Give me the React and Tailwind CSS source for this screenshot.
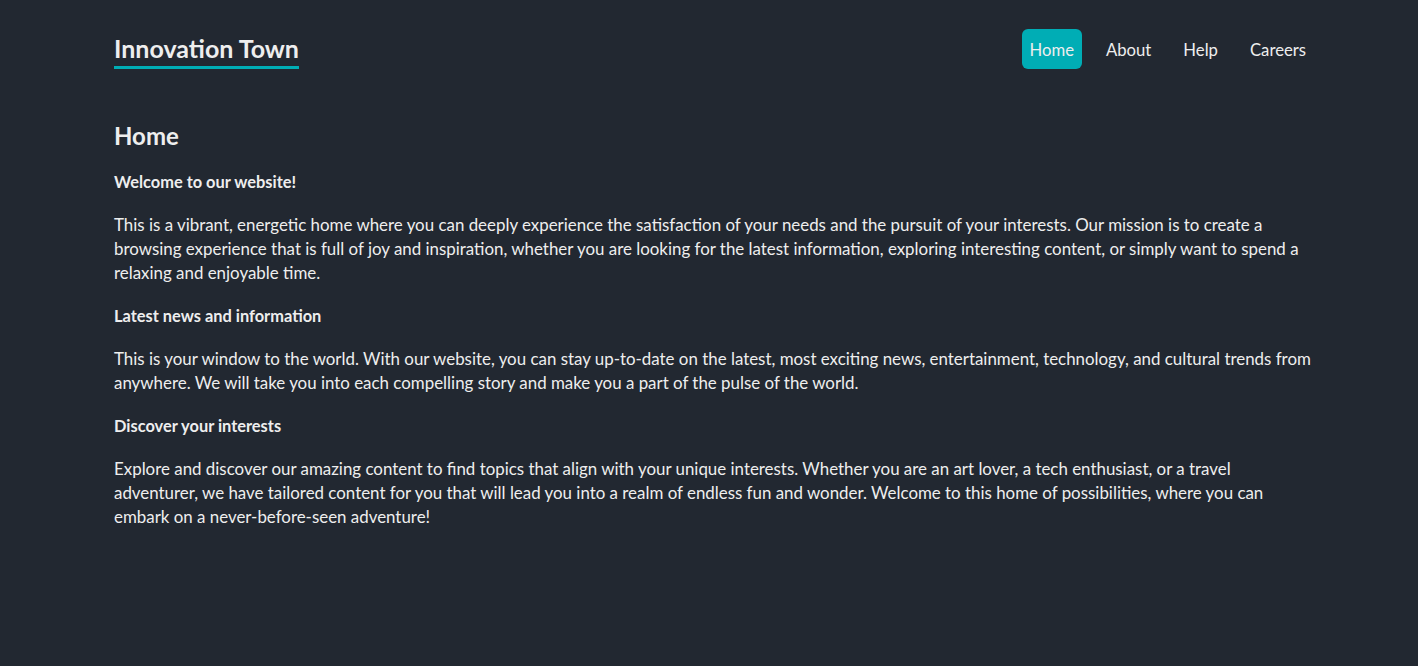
import { useState } from "react";

const links = ["Home", "About", "Help", "Careers"];

const sections = [
  {
    title: "Welcome to our website!",
    text: "This is a vibrant, energetic home where you can deeply experience the satisfaction of your needs and the pursuit of your interests. Our mission is to create a browsing experience that is full of joy and inspiration, whether you are looking for the latest information, exploring interesting content, or simply want to spend a relaxing and enjoyable time.",
  },
  {
    title: "Latest news and information",
    text: "This is your window to the world. With our website, you can stay up-to-date on the latest, most exciting news, entertainment, technology, and cultural trends from anywhere. We will take you into each compelling story and make you a part of the pulse of the world.",
  },
  {
    title: "Discover your interests",
    text: "Explore and discover our amazing content to find topics that align with your unique interests. Whether you are an art lover, a tech enthusiast, or a travel adventurer, we have tailored content for you that will lead you into a realm of endless fun and wonder. Welcome to this home of possibilities, where you can embark on a never-before-seen adventure!",
  },
];

export default function App() {
  const [active, setActive] = useState("Home");

  return (
    <div className="min-h-screen bg-[#222831] text-[#eeeeee] font-['Lato',sans-serif]">
      <div className="pl-[114px] w-[1314px]">
        <header className="flex items-center justify-between pt-[29px]">
          <a className="text-[25px] font-bold leading-[30px] border-b-[3px] border-[#00adb5] pb-[3px] mt-[3px]">
            Innovation Town
          </a>
          <nav className="flex items-center gap-4">
            {links.map((l) => (
              <button
                key={l}
                onClick={() => setActive(l)}
                className={`h-10 px-2 pt-[3px] rounded-md text-[16.7px] ${
                  active === l ? "bg-[#00adb5]" : ""
                }`}
              >
                {l}
              </button>
            ))}
          </nav>
        </header>

        <main className="pt-[51px]">
          <h2 className="text-[24px] font-bold leading-8 mb-[18px]">Home</h2>
          {sections.map((s) => (
            <div key={s.title}>
              <p className="text-[16.4px] font-bold leading-6 mb-[19px]">{s.title}</p>
              <p className="text-[16.9px] leading-6 mb-[19px]">{s.text}</p>
            </div>
          ))}
        </main>
      </div>
    </div>
  );
}
